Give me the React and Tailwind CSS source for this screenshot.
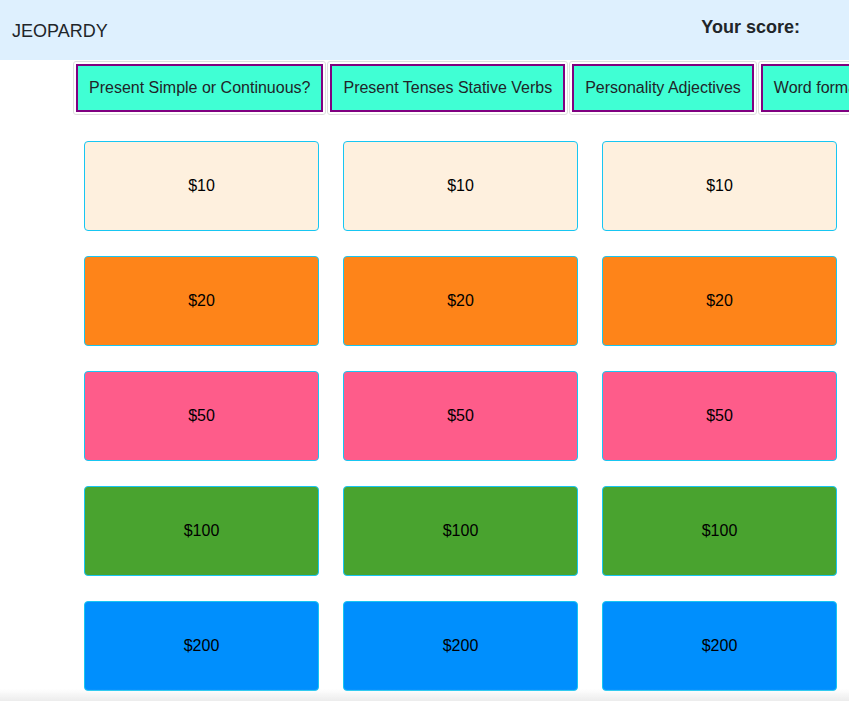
import React from "react";

const categories = [
    "Present Simple or Continuous?",
    "Present Tenses Stative Verbs",
    "Personality Adjectives",
    "Word formation",
];

const rows = [
    { value: "$10", color: "bg-[#fef0de]" },
    { value: "$20", color: "bg-[#fe8419]" },
    { value: "$50", color: "bg-[#fe5c8a]" },
    { value: "$100", color: "bg-[#49a32f]" },
    { value: "$200", color: "bg-[#008ffd]" },
];

const App = () => {
    return (
        <div className="w-screen min-h-screen overflow-hidden bg-white text-[#212529] font-['Liberation_Sans',Arial,sans-serif]">
            <header className="h-[60px] bg-[#def0fe] flex items-center justify-between pl-3 pr-[49px] pt-0.5">
                <h1 className="text-[18px] leading-6">JEOPARDY</h1>
                <div className="text-[18px] leading-6 font-bold -mt-2">Your score:</div>
            </header>

            {/* category headers, the last one runs off the right edge */}
            <div className="flex gap-px pl-[73px] mt-px whitespace-nowrap">
                {categories.map(cat => (
                    <div key={cat} className="shrink-0 border border-[#dedede] rounded-[3px] p-[2px]">
                        <button className="bg-[#40ffd4] border-2 border-[#800080] px-[11px] py-2.5 text-[16px] leading-6 text-[#212529]">
                            {cat}
                        </button>
                    </div>
                ))}
            </div>

            <div className="grid grid-cols-[235px_235px_235px] gap-x-6 gap-y-[25px] pl-[84px] mt-[26px]">
                {rows.map(row =>
                    [0, 1, 2].map(col => (
                        <button
                            key={row.value + col}
                            className={`h-[90px] ${row.color} border border-[#17c6f2] rounded-[4px] text-[16px] text-black`}
                        >
                            {row.value}
                        </button>
                    ))
                )}
            </div>

            <div className="fixed bottom-0 left-0 right-0 h-3 bg-gradient-to-b from-transparent to-[#ececec] pointer-events-none" />
        </div>
    );
};

export default App;
